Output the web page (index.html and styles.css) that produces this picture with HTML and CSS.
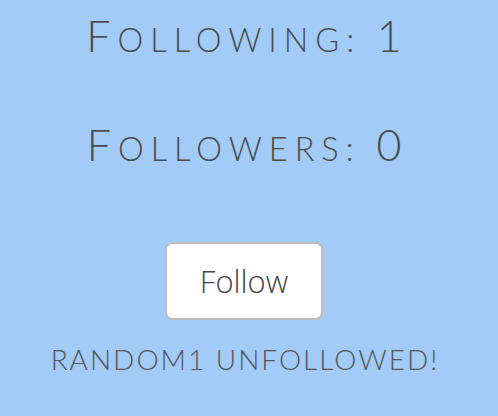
FILE: index.html
```html
<!DOCTYPE html>
<html>
<head>
<meta charset="utf-8">
<link rel="stylesheet" href="styles.css">
</head>
<body>
<main class="page">
  <h1 class="stat stat-following"><span class="cap">F</span>ollowing: <span class="cap">1</span></h1>
  <h1 class="stat stat-followers"><span class="cap">F</span>ollowers: <span class="cap">0</span></h1>
  <button class="follow-btn">Follow</button>
  <p class="status">random1 unfollowed!</p>
</main>
</body>
</html>
```
FILE: styles.css
```css
html, body {
  margin: 0;
  padding: 0;
  background: #a2cbf8;
}
.page {
  display: flex;
  flex-direction: column;
  align-items: center;
  height: 416px;
  padding-right: 10px;
  color: #4b4b4b;
  font-family: "Lato", "Open Sans", sans-serif;
}
.stat {
  margin: 0;
  height: 43px;
  font-weight: 300;
  font-size: 32.5px;
  line-height: 43px;
  text-transform: uppercase;
  letter-spacing: 7px;
  padding-left: 7px;
  white-space: nowrap;
}
.cap {
  font-size: 43px;
}
.stat-following {
  margin-top: 14px;
}
.stat-followers {
  margin-top: 66px;
}
.follow-btn {
  margin-top: 76px;
  width: 158px;
  height: 78px;
  background: #ffffff;
  border: 2px solid #bcbcbc;
  border-radius: 7px;
  font-family: "Open Sans", sans-serif;
  font-weight: 300;
  font-size: 31px;
  color: #444444;
  padding: 0;
}
.status {
  margin: 25px 0 0;
  font-weight: 300;
  font-size: 28px;
  line-height: 28px;
  text-transform: uppercase;
  letter-spacing: 2px;
  padding-left: 2px;
  color: #555555;
  white-space: nowrap;
}
```
